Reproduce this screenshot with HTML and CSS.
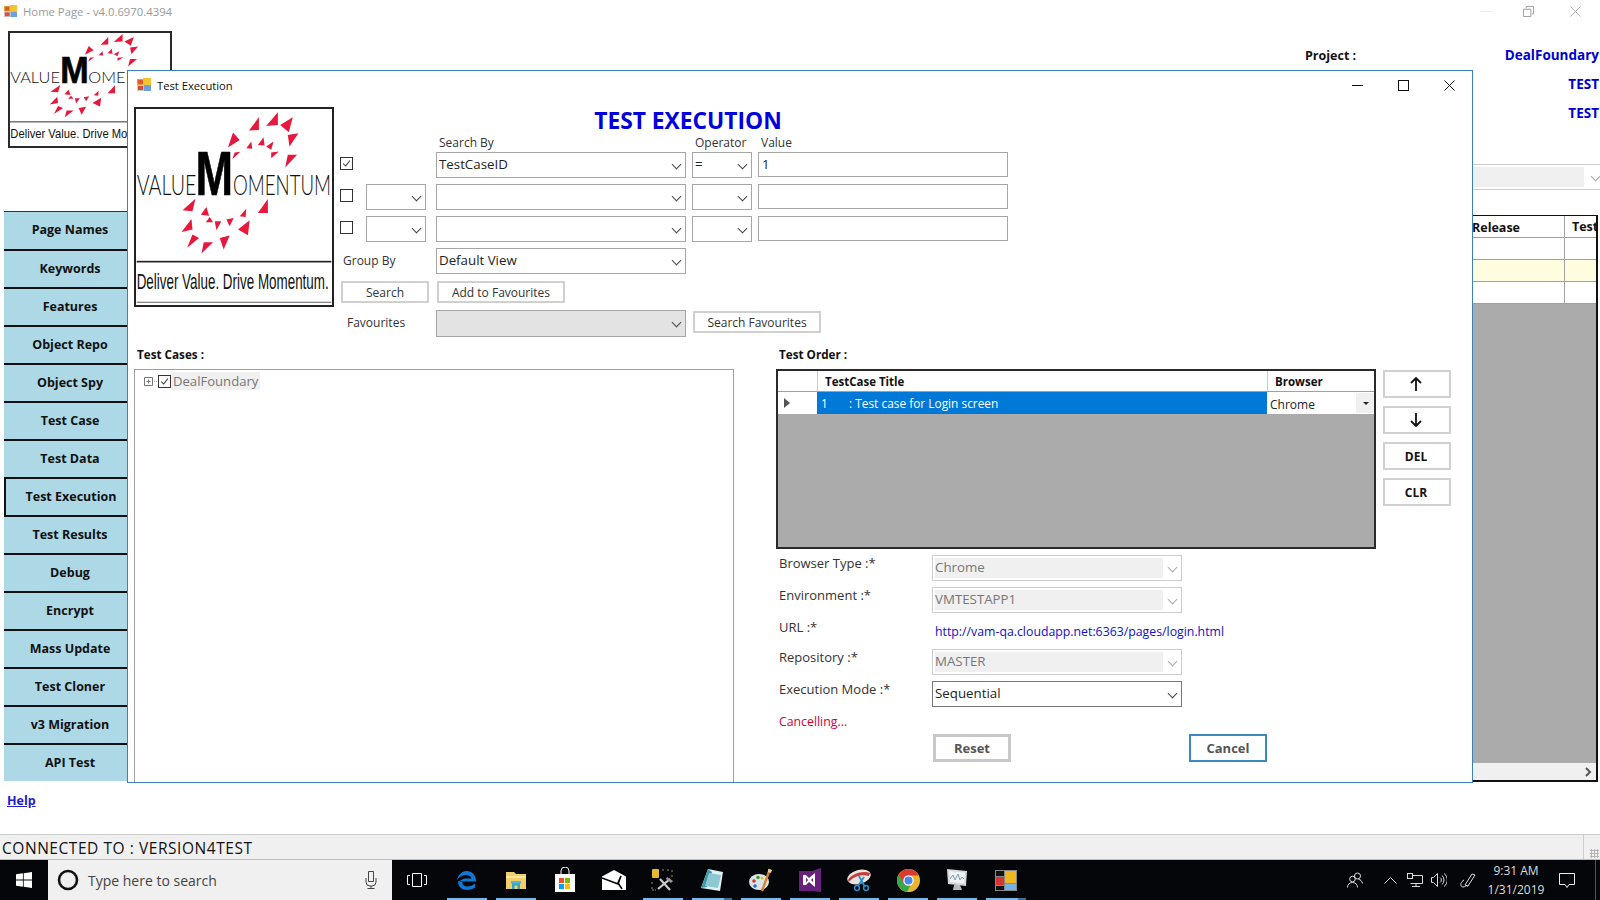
FILE: index.html
```html
<!DOCTYPE html>
<html lang="en">
<head>
<meta charset="utf-8">
<title>Home Page</title>
<link rel="stylesheet" href="styles.css">
</head>
<body>
<svg class="defs" width="0" height="0" aria-hidden="true">
  <defs>
    <g id="rays" fill="#e8173c">
      <polygon points="748,392 778,352 778,390"/><polygon points="800,378 835,337 835,375"/><polygon points="842,375 880,352 868,397"/>
      <polygon points="865,405 897,400 870,440"/><polygon points="857,503 865,465 893,465"/><polygon points="685,443 700,398 720,420"/>
      <polygon points="698,478 722,456 705,458"/><polygon points="740,445 755,425 758,447"/><polygon points="775,435 792,412 795,437"/>
      <polygon points="800,440 822,425 815,450"/><polygon points="815,475 838,455 815,458"/><polygon points="548,632 587,597 578,635"/>
      <polygon points="603,645 620,622 628,648"/><polygon points="775,640 805,598 805,640"/><polygon points="720,650 740,627 738,652"/>
      <polygon points="545,697 575,658 578,690"/><polygon points="618,668 630,652 640,668"/><polygon points="645,665 665,665 650,692"/>
      <polygon points="680,660 702,655 690,680"/><polygon points="715,690 750,662 745,707"/><polygon points="562,745 578,705 598,715"/>
      <polygon points="605,762 612,728 640,728"/><polygon points="660,715 690,708 672,750"/>
    </g>
    <g id="appicon">
      <rect x="0" y="1" width="7" height="6" fill="#d9a441"/><rect x="1" y="2" width="5" height="4" fill="#e2562d"/>
      <rect x="0" y="7" width="7" height="6" fill="#c9c9c9"/><rect x="1" y="8" width="5" height="4" fill="#e04a3a"/>
      <rect x="6" y="0" width="8" height="7" fill="#f4c430"/><rect x="7" y="7" width="7" height="6" fill="#6f9fdc"/>
    </g>
  </defs>
</svg>

<div class="screen">
  <main class="app">
    <header class="app-title">
      <svg class="title-icon" viewBox="0 0 14 14"><use href="#appicon"/></svg>
      <span class="app-title-text">Home Page - v4.0.6970.4394</span>
      <div class="app-controls">
        <span class="ctl-min"></span>
        <svg class="ctl" viewBox="0 0 12 12"><path d="M3.500 2.500V.5h8v8h-2M.5 3.500h8v8h-8z" fill="none" stroke="#999"/></svg>
        <svg class="ctl" viewBox="0 0 12 12"><path d="M.5.5l11 11M11.500.5l-11 11" fill="none" stroke="#aaa"/></svg>
      </div>
    </header>

    <div class="app-body">
      <aside class="left">
        <div class="main-logo">
          <svg viewBox="25 95 490 347" width="164" height="117" preserveAspectRatio="none">
            <g transform="translate(185 248) scale(.75 .58) translate(-592 -585)"><use href="#rays"/></g>
            <text x="32" y="248" class="lg-thin" font-size="46" textLength="148" lengthAdjust="spacingAndGlyphs">VALUE</text>
            <text x="181" y="248" class="lg-bold" font-size="109" textLength="85" lengthAdjust="spacingAndGlyphs">M</text>
            <text x="265" y="248" class="lg-thin" font-size="46" textLength="256" lengthAdjust="spacingAndGlyphs">OMENTUM</text>
            <rect x="30" y="363" width="480" height="3" fill="#333"/>
            <text x="32" y="413" class="lg-tag" font-size="38" textLength="480" lengthAdjust="spacingAndGlyphs">Deliver Value. Drive Momentum.</text>
          </svg>
        </div>
        <nav class="nav">
          <a class="nav-btn">Page Names</a><a class="nav-btn">Keywords</a><a class="nav-btn">Features</a>
          <a class="nav-btn">Object Repo</a><a class="nav-btn">Object Spy</a><a class="nav-btn">Test Case</a>
          <a class="nav-btn">Test Data</a><a class="nav-btn nav-active">Test Execution</a><a class="nav-btn nav-after">Test Results</a>
          <a class="nav-btn">Debug</a><a class="nav-btn">Encrypt</a><a class="nav-btn">Mass Update</a>
          <a class="nav-btn">Test Cloner</a><a class="nav-btn">v3 Migration</a><a class="nav-btn">API Test</a>
        </nav>
        <a class="help">Help</a>
      </aside>

      <section class="right">
        <div class="project">
          <span class="project-label">Project :</span><span class="project-value">DealFoundary</span>
          <span></span><span class="project-value">TEST</span>
          <span></span><span class="project-value">TEST</span>
        </div>
        <div class="right-combo"><span class="right-combo-fill"></span><i class="chev chev-light"></i></div>
        <div class="release-grid">
          <div class="rg-head"><span></span><span class="rg-cell">Release</span><span class="rg-cell rg-test">Test</span></div>
          <div class="rg-row"><span></span><span></span><span class="rg-sep"></span></div>
          <div class="rg-row rg-yellow"><span></span><span></span><span class="rg-sep"></span></div>
          <div class="rg-row"><span></span><span></span><span class="rg-sep"></span></div>
          <div class="rg-empty"></div>
          <div class="rg-scroll"><svg width="8" height="10" viewBox="0 0 8 10"><path d="M2 1l4 4-4 4" fill="none" stroke="#555" stroke-width="2"/></svg></div>
        </div>
      </section>
    </div>

    <div class="modal">
      <header class="modal-title">
        <svg class="modal-icon" viewBox="0 0 14 14"><use href="#appicon"/></svg>
        <span class="modal-title-text">Test Execution</span>
        <div class="modal-controls">
          <svg class="ctl" viewBox="0 0 11 11"><path d="M0 5.500h11" stroke="#111"/></svg>
          <svg class="ctl" viewBox="0 0 11 11"><rect x=".5" y=".5" width="10" height="10" fill="none" stroke="#111"/></svg>
          <svg class="ctl" viewBox="0 0 11 11"><path d="M.5.5l10 10M10.500.5l-10 10" fill="none" stroke="#111"/></svg>
        </div>
      </header>

      <div class="top">
        <div class="modal-logo">
          <svg viewBox="408 327 590 590" width="196" height="196">
            <use href="#rays"/>
            <text x="410" y="585" class="lg-thin" font-size="84" textLength="180" lengthAdjust="spacingAndGlyphs">VALUE</text>
            <text x="587" y="585" class="lg-bold" font-size="188" textLength="113" lengthAdjust="spacingAndGlyphs">M</text>
            <text x="700" y="585" class="lg-thin" font-size="84" textLength="295" lengthAdjust="spacingAndGlyphs">OMENTUM</text>
            <rect x="410" y="784" width="586" height="5" fill="#222"/>
            <text x="410" y="870" class="lg-tag" font-size="66" textLength="578" lengthAdjust="spacingAndGlyphs">Deliver Value. Drive Momentum.</text>
            <rect x="410" y="907" width="586" height="4" fill="#888"/>
          </svg>
        </div>

        <form class="search">
          <h1 class="heading">TEST EXECUTION</h1>
          <div class="search-labels">
            <span class="lb-search">Search By</span><span class="lb-op">Operator</span><span class="lb-val">Value</span>
          </div>
          <div class="search-grid">
            <span class="check"><svg viewBox="0 0 13 13"><path d="M2.500 6.500l3 3 5-6.500" fill="none" stroke="#333" stroke-width="1.200"/></svg></span><span></span>
            <div class="combo combo-wide"><span>TestCaseID</span><i class="chev"></i></div>
            <div class="combo combo-small"><span>=</span><i class="chev"></i></div>
            <div class="text-input">1</div>

            <span class="check"></span>
            <div class="combo combo-small"><i class="chev"></i></div>
            <div class="combo combo-wide"><i class="chev"></i></div>
            <div class="combo combo-small"><i class="chev"></i></div>
            <div class="text-input"></div>

            <span class="check"></span>
            <div class="combo combo-small"><i class="chev"></i></div>
            <div class="combo combo-wide"><i class="chev"></i></div>
            <div class="combo combo-small"><i class="chev"></i></div>
            <div class="text-input"></div>

            <span class="group-label">Group By</span>
            <div class="combo combo-wide"><span>Default View</span><i class="chev"></i></div>
            <span class="filler"></span>

            <span class="btn btn-search">Search</span>
            <span class="btn btn-add">Add to Favourites</span>
            <span class="filler"></span>

            <span class="fav-label">Favourites</span>
            <div class="combo combo-wide combo-grey"><i class="chev"></i></div>
            <span class="btn btn-fav">Search Favourites</span>
          </div>
        </form>
      </div>

      <div class="panels">
        <section class="cases">
          <h2 class="panel-label">Test Cases :</h2>
          <div class="tree">
            <div class="tree-node">
              <svg class="tree-exp" width="16" height="9" viewBox="0 0 16 9"><path d="M.5.500h8v8h-8zM2.500 4.500h4M4.500 2.500v4" fill="none" stroke="#777"/><path d="M10 4.500h3" stroke="#aaa" stroke-dasharray="1 1"/></svg>
              <span class="tree-check"><svg viewBox="0 0 13 13"><path d="M2.500 6.500l3 3 5-6.500" fill="none" stroke="#333" stroke-width="1.200"/></svg></span>
              <span class="tree-name">DealFoundary</span>
            </div>
          </div>
        </section>

        <section class="order">
          <h2 class="panel-label">Test Order :</h2>
          <div class="order-top">
            <div class="order-grid">
              <div class="og-head"><span></span><span class="og-h1">TestCase Title</span><span class="og-h2">Browser</span></div>
              <div class="og-row">
                <span class="og-mark"><svg width="6" height="10" viewBox="0 0 6 10"><path d="M0 0l6 5-6 5z" fill="#555"/></svg></span>
                <span class="og-title"><b class="og-num">1</b>: Test case for Login screen</span>
                <span class="og-browser">Chrome<i class="og-drop"></i></span>
              </div>
            </div>
            <div class="order-btns">
              <span class="btn side-btn"><svg width="12" height="14" viewBox="0 0 12 14"><path d="M6 14V1M1 6l5-5 5 5" fill="none" stroke="#111" stroke-width="1.800"/></svg></span>
              <span class="btn side-btn"><svg width="12" height="14" viewBox="0 0 12 14"><path d="M6 0v13M1 8l5 5 5-5" fill="none" stroke="#111" stroke-width="1.800"/></svg></span>
              <span class="btn side-btn">DEL</span>
              <span class="btn side-btn">CLR</span>
            </div>
          </div>
          <div class="order-form">
            <span class="of-label">Browser Type :*</span>
            <div class="combo combo-off"><span class="combo-off-fill">Chrome</span><i class="chev chev-light"></i></div>
            <span class="of-label">Environment :*</span>
            <div class="combo combo-off"><span class="combo-off-fill">VMTESTAPP1</span><i class="chev chev-light"></i></div>
            <span class="of-label">URL :*</span>
            <a class="of-url">http://vam-qa.cloudapp.net:6363/pages/login.html</a>
            <span class="of-label">Repository :*</span>
            <div class="combo combo-off"><span class="combo-off-fill">MASTER</span><i class="chev chev-light"></i></div>
            <span class="of-label">Execution Mode :*</span>
            <div class="combo combo-dark"><span>Sequential</span><i class="chev"></i></div>
          </div>
          <div class="cancelling">Cancelling...</div>
          <div class="order-actions">
            <span class="action action-reset">Reset</span>
            <span class="action action-cancel">Cancel</span>
          </div>
        </section>
      </div>
    </div>
  </main>

  <footer class="status"><span class="status-text">CONNECTED TO : VERSION4TEST</span><i class="status-end"></i></footer>

  <div class="taskbar">
    <div class="start">
      <svg width="16" height="16" viewBox="0 0 16 16" fill="#fff"><path d="M0 2.300l6.900-1V7.500H0zM7.700 1.200L16 0v7.500H7.700zM0 8.400h6.900v6.300L0 13.700zM7.700 8.400H16V16l-8.300-1.200z"/></svg>
    </div>
    <div class="searchbox">
      <svg class="cortana" width="22" height="22" viewBox="0 0 22 22"><circle cx="11" cy="11" r="9" fill="none" stroke="#111" stroke-width="2.600"/></svg>
      <span class="searchtext">Type here to search</span>
      <svg class="mic" width="12" height="18" viewBox="0 0 12 18"><path d="M3.500.5h5v10h-5zM1 7v4a4 4 0 0 0 4 4h2a4 4 0 0 0 4-4V7M6 15v2.500M2.500 17.500h7" fill="none" stroke="#444"/></svg>
    </div>
    <div class="taskview"><svg width="20" height="14" viewBox="0 0 20 14"><path d="M5.500.5h9v13h-9zM3 2.500H.5v9H3M17 2.500h2.500v9H17" fill="none" stroke="#fff"/></svg></div>

    <div class="tb-apps">
      <span class="tb-app tb-on"><svg width="24" height="24" viewBox="0 0 24 24"><path d="M3.500 13.500h17.500C21 7 17 3 11.500 3 7 3 3 7 2 12c2-3 5-5 9-5 3 0 5 1.500 5.500 3.500H9" fill="#0f78d4"/><path d="M3 13c0 6 4 9 9 9 3 0 6-1 8-2.500v-4c-2 2-5 3-7.500 3-3 0-5-1.500-5.300-4.500z" fill="#0f78d4"/></svg></span>
      <span class="tb-app tb-on"><svg width="22" height="22" viewBox="0 0 22 22"><path d="M1 3h8l2 2h10v15H1z" fill="#f2cf6b"/><path d="M1 7h20v2H1z" fill="#fbe6a0"/><path d="M7 14h8v6h-2.500v-3.500h-3V20H7z" fill="#37a3c8"/><path d="M6 12h10v2.500H6z" fill="#4fb9d6"/></svg></span>
      <span class="tb-app"><svg width="22" height="26" viewBox="0 0 22 26"><path d="M7 7V4a4 4 0 0 1 8 0v3" fill="none" stroke="#fff"/><path d="M1 7h20v18H1z" fill="#fff"/><path d="M5 11h5v5H5z" fill="#f25022"/><path d="M11 11h5v5h-5z" fill="#7fba00"/><path d="M5 17h5v5H5z" fill="#00a4ef"/><path d="M11 17h5v5h-5z" fill="#ffb900"/></svg></span>
      <span class="tb-app"><svg width="24" height="20" viewBox="0 0 24 20"><path d="M0 6.500L12 0l12 6.500V20H0z" fill="#fff"/><path d="M0 8l16 6 3-8-3 7 4 6" fill="none" stroke="#000" stroke-width="1.600"/></svg></span>
      <span class="tb-app tb-on"><svg width="24" height="24" viewBox="0 0 24 24"><rect x="1" y="1" width="7" height="9" rx="1" fill="#e8b92e"/><path d="M11 2h2m3 0h3M21 2v2m0 3v2M1 14v2m0 3v3h4" stroke="#6d9a52" stroke-width="1" fill="none" stroke-dasharray="2 1"/><path d="M7 21L19 11M9 11l10 11" stroke="#ccc" stroke-width="2.200"/><path d="M16 9l6 4-2 2-5-4z" fill="#999"/></svg></span>
      <span class="tb-app tb-on tb-stack"><svg width="24" height="24" viewBox="0 0 24 24"><path d="M8 1l15 3-3 19-19-3z" fill="#dff1f4"/><path d="M8 1L1 20l6-1 5-15z" fill="#3d9aa8"/><path d="M9 5l12 2-3 13-13-2z" fill="#8dc8d3"/></svg></span>
      <span class="tb-app tb-on"><svg width="24" height="24" viewBox="0 0 24 24"><ellipse cx="10" cy="14" rx="10" ry="8" fill="#d8e4ec"/><circle cx="5" cy="13" r="1.800" fill="#d9342b"/><circle cx="9" cy="9.500" r="1.800" fill="#3f9c35"/><circle cx="13" cy="10" r="1.500" fill="#e8b92e"/><circle cx="6" cy="18" r="1.800" fill="#2a6fb8"/><path d="M21 1L13 23" stroke="#d8842e" stroke-width="2.400"/><path d="M19 1l4 1-1 3-3-1z" fill="#e9c9a0"/></svg></span>
      <span class="tb-app tb-on"><svg width="22" height="24" viewBox="0 0 22 24"><path d="M0 3l13 0L22 0v24l-9-1H0z" fill="#68217a"/><path d="M4 7l3 0 3 3 6-5v14l-6-5-3 3H4v-10zM7 9.500v5L9 12zM12 12l2 2v-4z" fill="#fff" fill-rule="evenodd"/></svg></span>
      <span class="tb-app tb-on"><svg width="24" height="24" viewBox="0 0 24 24"><ellipse cx="12" cy="9" rx="12" ry="7" transform="rotate(-15 12 9)" fill="#e9e4df"/><path d="M1 12C4 6 16 2 23 5l-1 3C14 6 6 9 2 14z" fill="#c83b3b"/><path d="M12 8l6 11M17 9l-6 9" stroke="#2a8ec9" stroke-width="1.800"/><circle cx="10" cy="20" r="2.400" fill="none" stroke="#2a8ec9" stroke-width="1.500"/><circle cx="19" cy="20" r="2.400" fill="none" stroke="#2a8ec9" stroke-width="1.500"/></svg></span>
      <span class="tb-app tb-on"><svg width="23" height="23" viewBox="0 0 23 23"><circle cx="11.500" cy="11.500" r="11.500" fill="#e8b62d"/><path d="M11.500 0A11.500 11.500 0 0 0 1.500 6L6 13.500 11.500 6.500H21.500A11.500 11.500 0 0 0 11.500 0z" fill="#d93b30"/><path d="M1.500 6A11.500 11.500 0 0 0 10 23l4-7.500-7-1z" fill="#3ba44c"/><circle cx="11.500" cy="11.500" r="5.200" fill="#fff"/><circle cx="11.500" cy="11.500" r="4" fill="#4a87ea"/></svg></span>
      <span class="tb-app tb-on"><svg width="24" height="24" viewBox="0 0 24 24"><path d="M2 1l20 2-1 15-18-2z" fill="#d5d8da"/><path d="M4 3l16 1.500-1 11-14-1.500z" fill="#eef2f4"/><path d="M5 11l3-4 2 5 3-6 2 6 2-3 2 2" fill="none" stroke="#7f9fb5"/><path d="M9 17h6l2 5H8z" fill="#b8bcbf"/></svg></span>
      <span class="tb-app tb-on tb-stack"><svg width="22" height="21" viewBox="0 0 22 21"><rect x="0" y="0" width="22" height="21" fill="#888"/><rect x="1" y="1" width="8" height="5" fill="#111"/><rect x="1" y="7" width="8" height="8" fill="#d6352f"/><rect x="1" y="16" width="8" height="4" fill="#111"/><rect x="10" y="1" width="11" height="12" fill="#efb71e"/><rect x="10" y="14" width="11" height="6" fill="#6fb1e8"/></svg></span>
    </div>

    <div class="tray">
      <svg class="tray-people" width="16" height="16" viewBox="0 0 16 16"><g fill="none" stroke="#ddd"><circle cx="10.500" cy="4" r="3"/><circle cx="5.500" cy="7" r="2.800"/><path d="M.5 15.500c0-3 2-5 5-5s5 2 5 5M11.500 7.500c2 0 3.500 1.500 4 4"/></g></svg>
      <svg class="tray-chev" width="13" height="7" viewBox="0 0 13 7"><path d="M.5 6.500l6-6 6 6" fill="none" stroke="#ddd"/></svg>
      <svg class="tray-net" width="16" height="14" viewBox="0 0 16 14"><path d="M3.500 2.500h12v8h-12M9 10.500v3M5 13.500h8" fill="none" stroke="#ddd"/><rect x=".5" y=".5" width="5" height="5" fill="#0a0a0a" stroke="#ddd"/></svg>
      <svg class="tray-vol" width="16" height="14" viewBox="0 0 16 14"><path d="M.5 4.500h2l4-4v13l-4-4h-2zM9 4.500a3 3 0 0 1 0 5M11 2.500a6 6 0 0 1 0 9M13 .5a8 8 0 0 1 0 13" fill="none" stroke="#ddd"/></svg>
      <svg class="tray-pen" width="16" height="15" viewBox="0 0 16 15"><path d="M5 12l7-11 3 1-7 11zM4 7c-4 2-4 7-1 7 2 0 3-2 5-1" fill="none" stroke="#ddd"/></svg>
      <div class="clock"><span>9:31 AM</span><span>1/31/2019</span></div>
      <svg class="tray-note" width="16" height="15" viewBox="0 0 16 15"><path d="M.5.500h15v11H10l-2 3-2-3H.5z" fill="none" stroke="#eee"/></svg>
      <i class="showdesk"></i>
    </div>
  </div>
</div>
</body>
</html>
```

FILE: styles.css
```css
* { box-sizing: border-box; }
html, body { margin: 0; padding: 0; }
body { background: #fff; font-family: "Open Sans", "Noto Sans", sans-serif; font-size: 12px; color: #222; }
.defs { position: absolute; }
.screen { width: 1600px; height: 900px; display: flex; flex-direction: column; overflow: hidden; }

/* ---------- main window ---------- */
.app { position: relative; height: 834px; flex: none; display: flex; flex-direction: column; background: #fff; }
.app-title { height: 31px; flex: none; display: flex; align-items: center; padding: 0 0 9px 4px; }
.title-icon { width: 13px; height: 13px; }
.app-title-text { margin-left: 6px; color: #999; font-size: 11.300px; }
.app-controls { margin-left: auto; display: flex; align-items: center; gap: 36px; padding-right: 19px; }
.ctl-min { width: 12px; height: 1px; background: #eee; margin-right: -6px; }
.ctl { width: 11px; height: 11px; display: block; }
.app-body { flex: 1; display: flex; justify-content: space-between; min-height: 0; }

.left { width: 136px; padding-left: 4px; display: flex; flex-direction: column; }
.main-logo { width: 164px; height: 117px; margin-left: 4px; flex: none; outline: 2px solid #2a2a2a; outline-offset: -2px; }
.main-logo svg { display: block; }
.lg-thin { font-family: "Lato", "Liberation Sans", sans-serif; font-weight: 300; fill: #111; }
.lg-bold { font-family: "Liberation Sans", sans-serif; font-weight: 700; fill: #000; stroke: #000; stroke-width: 2; }
.lg-tag { font-family: "Liberation Sans", sans-serif; fill: #111; }

.nav { margin-top: 63px; display: flex; flex-direction: column; width: 132px; flex: none; }
.nav-btn { height: 38px; flex: none; display: flex; align-items: center; justify-content: center; padding-bottom: 2px; background: #add8e6; border-top: 2px solid #111; color: #111; font-weight: 700; font-size: 12.500px; }
.nav-btn:first-child { border-top: 1px solid #333; }
.nav-active { border-left: 2px solid #111; }
.help { margin: 11px 0 0 3px; color: #2020c8; font-weight: 700; font-size: 12.500px; text-decoration: underline; }

.right { width: 295px; display: flex; flex-direction: column; }
.project { display: grid; grid-template-columns: 1fr auto; grid-auto-rows: 29px; align-items: center; margin-top: 9px; height: 87px; padding-right: 1px; }
.project-label { font-weight: 700; font-size: 12.500px; color: #111; padding-top: 2px; }
.project-value { font-weight: 700; font-size: 13.500px; color: #0000cc; text-align: right; }
.right-combo { margin-top: 37px; height: 26px; display: flex; align-items: center; border-top: 1px solid #ccc; border-bottom: 1px solid #ccc; position: relative; }
.right-combo-fill { width: 279px; height: 20px; background: #f0f0f0; }
.chev { position: absolute; right: 5px; top: 8px; width: 7px; height: 7px; border-right: 1px solid #444; border-bottom: 1px solid #444; transform: rotate(45deg); }
.chev-light { border-color: #aaa; }
.right-combo .chev { right: 1px; }
.release-grid { margin-top: 25px; width: 293px; height: 567px; border: 2px solid #111; border-left: 0; border-top-width: 1px; display: flex; flex-direction: column; }
.rg-head, .rg-row { display: grid; grid-template-columns: 167px 92px 1fr; height: 22px; flex: none; border-bottom: 1px solid #a0a0a0; align-items: center; }
.rg-cell { font-weight: 700; font-size: 12.500px; color: #111; }
.rg-head .rg-test { border-left: 1px solid #a0a0a0; height: 22px; line-height: 22px; padding-left: 7px; overflow: hidden; }
.rg-sep { border-left: 1px solid #a0a0a0; height: 22px; }
.rg-yellow { background: #fffde0; }
.rg-empty { flex: 1; background: #ababab; }
.rg-scroll { height: 17px; background: #f0f0f0; flex: none; display: flex; align-items: center; justify-content: flex-end; padding-right: 4px; }

/* ---------- dialog on the desktop ---------- */
.modal { position: absolute; left: 127px; top: 70px; width: 1346px; height: 713px; background: #fff; border: 1px solid #3c80b8; display: flex; flex-direction: column; }
.modal-title { height: 36px; flex: none; display: flex; align-items: center; padding: 0 17px 8px 9px; }
.modal-icon { width: 14px; height: 14px; }
.modal-title-text { margin-left: 6px; color: #111; font-size: 11.200px; }
.modal-controls { margin-left: auto; display: flex; gap: 35px; }

.top { height: 238px; flex: none; display: flex; }
.modal-logo { width: 200px; height: 200px; margin-left: 6px; border: 2px solid #222; flex: none; }
.modal-logo svg { display: block; }
.search { margin-left: 6px; width: 668px; }
.heading { margin: 0; height: 26px; padding-left: 28px; text-align: center; font-size: 22.800px; line-height: 28px; font-weight: 700; color: #0000dd; }
.search-labels { height: 19px; display: flex; align-items: center; color: #333; font-size: 12px; }
.lb-search { margin-left: 96px; width: 256px; padding-left: 3px; }
.lb-op { width: 66px; margin-left: 3px; }
.search-grid { display: grid; grid-template-columns: 26px 70px 256px 66px 250px; grid-template-rows: 26px 26px 26px 26px 24px 27px; row-gap: 6px; align-items: center; }
.check { width: 13px; height: 13px; border: 1px solid #333; display: block; margin-top: -4px; }
.check svg { display: block; width: 11px; height: 11px; }
.combo { position: relative; height: 26px; border: 1px solid #a6a6a6; padding: 0 18px 2px 2px; display: flex; align-items: center; font-size: 13.300px; color: #222; background: #fff; }
.combo-wide { width: 250px; }
.combo-small { width: 60px; }
.combo-grey { background: #e3e3e3; height: 27px; }
.text-input { width: 250px; height: 25px; border: 1px solid #a6a6a6; padding: 0 3px 2px; display: flex; align-items: center; font-size: 13px; align-self: start; }
.group-label { grid-column: 1 / 3; padding: 0 0 2px 3px; font-size: 12px; color: #333; }
.filler { grid-column: 4 / 6; }
.btn { display: flex; align-items: center; justify-content: center; height: 22px; border: 2px solid #d0d0d0; background: #fff; font-size: 12px; color: #333; }
.btn-search { grid-column: 1 / 3; width: 88px; margin-left: 1px; }
.btn-add { width: 128px; margin-left: 1px; }
.fav-label { grid-column: 1 / 3; padding: 0 0 2px 7px; font-size: 12px; color: #333; }
.btn-fav { grid-column: 4 / 6; width: 128px; margin: 1px 0 0 1px; align-self: start; }

.panels { flex: 1; display: flex; min-height: 0; }
.panel-label { margin: 0; height: 24px; padding: 0 0 6px 3px; display: flex; align-items: center; font-size: 11.700px; font-weight: 700; color: #111; }
.cases { width: 600px; margin-left: 6px; display: flex; flex-direction: column; }
.tree { flex: 1; border: 1px solid #a0a0a0; border-bottom: 0; padding: 2px 0 0 9px; }
.tree-node { display: flex; align-items: center; height: 18px; }
.tree-exp { flex: none; }
.tree-check { width: 13px; height: 13px; border: 1px solid #333; margin-left: -2px; flex: none; }
.tree-check svg { display: block; width: 11px; height: 11px; }
.tree-name { height: 18px; line-height: 18px; padding: 0 2px; background: #f0f0f0; color: #777; font-size: 13.100px; }

.order { margin-left: 42px; width: 680px; display: flex; flex-direction: column; }
.order-top { display: flex; gap: 7px; height: 180px; flex: none; }
.order-grid { width: 600px; height: 180px; background: #ababab; border: 2px solid #2a2a2a; }
.og-head, .og-row { display: grid; grid-template-columns: 39px 450px 1fr; background: #fff; }
.og-head { height: 21px; align-items: center; font-weight: 700; font-size: 11.500px; color: #111; border-bottom: 1px solid #a0a0a0; }
.og-h1, .og-h2 { padding-left: 7px; border-left: 1px solid #ccc; height: 20px; line-height: 22px; }
.og-row { height: 22px; grid-template-rows: 22px; }
.og-mark { display: flex; align-items: center; padding-left: 6px; }
.og-title { background: #0078d7; color: #fff; font-size: 11.900px; line-height: 23px; padding-left: 4px; }
.og-num { font-weight: 400; display: inline-block; width: 28px; }
.og-browser { position: relative; font-size: 12px; line-height: 25px; padding-left: 3px; }
.og-drop { position: absolute; right: 0; top: 1px; width: 18px; height: 20px; background: #f0f0f0; }
.og-drop::after { content: ""; position: absolute; left: 7px; top: 9px; border: 3px solid transparent; border-top-color: #222; border-bottom: 0; }
.order-btns { width: 68px; padding-top: 1px; display: flex; flex-direction: column; gap: 8px; }
.side-btn { height: 28px; font-weight: 700; color: #111; font-size: 12px; padding-right: 2px; }

.order-form { margin-top: 6px; display: grid; grid-template-columns: 156px 250px; grid-template-rows: 26px 26px 24px 26px 26px; row-gap: 6px; }
.of-label { padding-left: 3px; font-size: 13px; color: #333; margin-top: -2px; line-height: 20px; }
.combo-off { border-color: #ccc; padding: 3px 18px 3px 2px; color: #777; }
.combo-off-fill { flex: 1; height: 20px; line-height: 18px; background: #f0f0f0; }
.combo-dark { border-color: #777; }
.of-url { color: #1010cc; font-size: 12.300px; padding-left: 3px; line-height: 26px; white-space: nowrap; }
.cancelling { margin: 5px 0 0 3px; height: 20px; line-height: 20px; color: #d40030; font-size: 12.300px; }
.order-actions { margin: 2px 0 0 157px; display: flex; }
.action { width: 78px; height: 28px; display: flex; align-items: center; justify-content: center; font-weight: 700; font-size: 13px; color: #555; background: #fff; }
.action-reset { border: 3px solid #c8c8c8; }
.action-cancel { margin-left: 178px; border: 2px solid #3a8ac0; }

/* ---------- status bar ---------- */
.status { height: 26px; flex: none; background: #f0f0f0; border-top: 1px solid #ccc; border-bottom: 1px solid #bbb; display: flex; align-items: center; padding-left: 2px; color: #111; }
.status-text { font-size: 15.500px; letter-spacing: .55px; padding-top: 2px; }
.status-end { margin-left: auto; width: 17px; height: 24px; border-left: 1px solid #ccc; position: relative; }
.status-end::after { content: ""; position: absolute; right: 1px; bottom: 1px; width: 9px; height: 9px; background: radial-gradient(circle, #b5b5b5 1px, transparent 1.200px) 0 0 / 3px 3px; }

/* ---------- taskbar ---------- */
.taskbar { flex: 1; background: #05060a; display: flex; align-items: stretch; color: #fff; }
.start { width: 48px; display: flex; align-items: center; justify-content: center; }
.searchbox { width: 344px; background: #f0f0f0; display: flex; align-items: center; padding-left: 9px; }
.cortana { flex: none; }
.searchtext { margin-left: 9px; color: #444; font-size: 14px; }
.mic { margin-left: auto; margin-right: 15px; }
.taskview { width: 55px; display: flex; align-items: center; justify-content: center; padding-right: 6px; }
.tb-apps { display: flex; gap: 9px; }
.tb-app { width: 40px; display: flex; align-items: center; justify-content: center; position: relative; }
.tb-on::after { content: ""; position: absolute; left: 0; right: 0; bottom: 0; height: 2px; background: #76b9ed; }
.tb-stack::before { content: ""; position: absolute; right: 0; bottom: 0; width: 8px; height: 2px; background: #3f6f93; z-index: 1; }
.tray { margin-left: auto; display: flex; align-items: center; position: relative; padding-right: 25px; }
.tray-chev { margin-left: 21px; }
.tray-net { margin-left: 10px; }
.tray-vol { margin-left: 8px; }
.tray-pen { margin-left: 13px; }
.clock { margin-left: 14px; width: 52px; display: flex; flex-direction: column; align-items: center; font-size: 12px; line-height: 19px; color: #ddd; white-space: nowrap; }
.tray-note { margin-left: 17px; }
.showdesk { position: absolute; right: 4px; top: 0; bottom: 0; width: 1px; background: #555; }
```
